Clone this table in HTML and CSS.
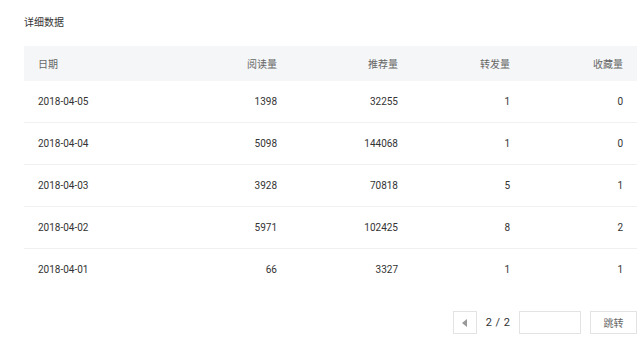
FILE: index.html
```html
<!DOCTYPE html>
<html lang="zh-CN">
<head>
    <meta charset="UTF-8">
    <title>详细数据</title>
    <link rel="stylesheet" href="styles.css">
</head>
<body>

<div class="panel">
    <div class="panel-title">详细数据</div>

    <table class="data-table">
        <colgroup>
            <col class="col-date">
            <col class="col-read">
            <col class="col-rec">
            <col class="col-share">
            <col class="col-fav">
        </colgroup>
        <thead>
            <tr>
                <th>日期</th>
                <th class="num">阅读量</th>
                <th class="num">推荐量</th>
                <th class="num">转发量</th>
                <th class="num">收藏量</th>
            </tr>
        </thead>
        <tbody>
            <tr>
                <td>2018-04-05</td>
                <td class="num">1398</td>
                <td class="num">32255</td>
                <td class="num">1</td>
                <td class="num">0</td>
            </tr>
            <tr>
                <td>2018-04-04</td>
                <td class="num">5098</td>
                <td class="num">144068</td>
                <td class="num">1</td>
                <td class="num">0</td>
            </tr>
            <tr>
                <td>2018-04-03</td>
                <td class="num">3928</td>
                <td class="num">70818</td>
                <td class="num">5</td>
                <td class="num">1</td>
            </tr>
            <tr>
                <td>2018-04-02</td>
                <td class="num">5971</td>
                <td class="num">102425</td>
                <td class="num">8</td>
                <td class="num">2</td>
            </tr>
            <tr>
                <td>2018-04-01</td>
                <td class="num">66</td>
                <td class="num">3327</td>
                <td class="num">1</td>
                <td class="num">1</td>
            </tr>
        </tbody>
    </table>

    <div class="pager">
        <button class="pager-prev" aria-label="上一页">
            <svg width="6" height="8" viewBox="0 0 6 8"><path d="M5 0 L5 8 L0 4 Z" fill="#999"/></svg>
        </button>
        <span class="pager-info">2 / 2</span>
        <input class="pager-input" type="text">
        <button class="pager-go">跳转</button>
    </div>
</div>

</body>
</html>
```

FILE: styles.css
```css
body {
    margin: 0;
    font-family: Roboto, "Noto Sans CJK SC", sans-serif;
    font-size: 10px;
    color: #333;
    background-color: #fff;
}
.panel {
    padding: 16px 3px 0 24px;
}
.panel-title {
    height: 14px;
    line-height: 14px;
    margin-bottom: 16px;
    color: #333;
}
.data-table {
    width: 613px;
    border-collapse: collapse;
    table-layout: fixed;
}
.col-date { width: 146px; }
.col-read { width: 121px; }
.col-rec { width: 121px; }
.col-share { width: 112px; }
.col-fav { width: 113px; }
.data-table th {
    height: 35px;
    padding: 0 14px;
    background-color: #f5f6f8;
    color: #666;
    font-weight: normal;
    text-align: left;
}
.data-table td {
    height: 41px;
    padding: 0 14px;
    border-bottom: 1px solid #f0f0f0;
}
.data-table tbody tr:last-child td {
    border-bottom: none;
}
.data-table .num {
    text-align: right;
}
.pager {
    display: flex;
    justify-content: flex-end;
    align-items: center;
    gap: 9px;
    margin-top: 21px;
}
.pager button,
.pager-input {
    box-sizing: border-box;
    height: 23px;
    border: 1px solid #e3e3e3;
    background-color: #fff;
    font-family: inherit;
    font-size: 10px;
    color: #666;
    border-radius: 0;
}
.pager-prev {
    width: 24px;
    padding: 0;
    display: flex;
    align-items: center;
    justify-content: center;
}
.pager-info {
    color: #333;
    font-size: 11px;
    word-spacing: 1px;
}
.pager-input {
    width: 62px;
    padding: 0 4px;
}
.pager-go {
    width: 47px;
    padding: 0;
}
```
